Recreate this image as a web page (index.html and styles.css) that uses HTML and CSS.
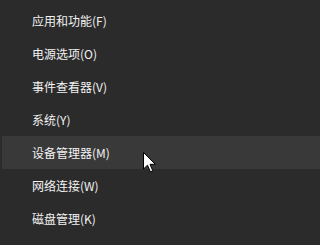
FILE: index.html
```
<!DOCTYPE html>
<html lang="zh-CN">
<head>
<meta charset="utf-8">
<link rel="stylesheet" href="styles.css">
</head>
<body>
<ul class="menu">
  <li class="item">应用和功能(F)</li>
  <li class="item">电源选项(O)</li>
  <li class="item">事件查看器(V)</li>
  <li class="item">系统(Y)</li>
  <li class="item active">设备管理器(M)</li>
  <li class="item">网络连接(W)</li>
  <li class="item">磁盘管理(K)</li>
</ul>
<svg class="cursor" width="14" height="22" viewBox="0 0 14 22">
  <path d="M0.5 0.5 L0.5 17 L4.5 13.2 L7.4 19.8 L9.8 18.8 L7 12.3 L12.3 12.3 Z" fill="#fff" stroke="#000" stroke-width="1" stroke-linejoin="miter"/>
</svg>
</body>
</html>
```
FILE: styles.css
```
html, body {
  margin: 0;
  padding: 0;
  background: #2b2b2b;
}
body {
  position: relative;
  min-height: 245px;
  overflow: hidden;
  font-family: "Noto Sans CJK SC", "Noto Sans", sans-serif;
  font-size: 12px;
  color: #f2f2f2;
}
.menu {
  list-style: none;
  margin: 0;
  padding: 4px 0 0 2px;
  display: flex;
  flex-direction: column;
}
.item {
  height: 33px;
  display: flex;
  align-items: center;
  padding-left: 30px;
  white-space: nowrap;
}
.active {
  background: #393939;
}
.cursor {
  position: absolute;
  left: 143px;
  top: 152px;
}
```
